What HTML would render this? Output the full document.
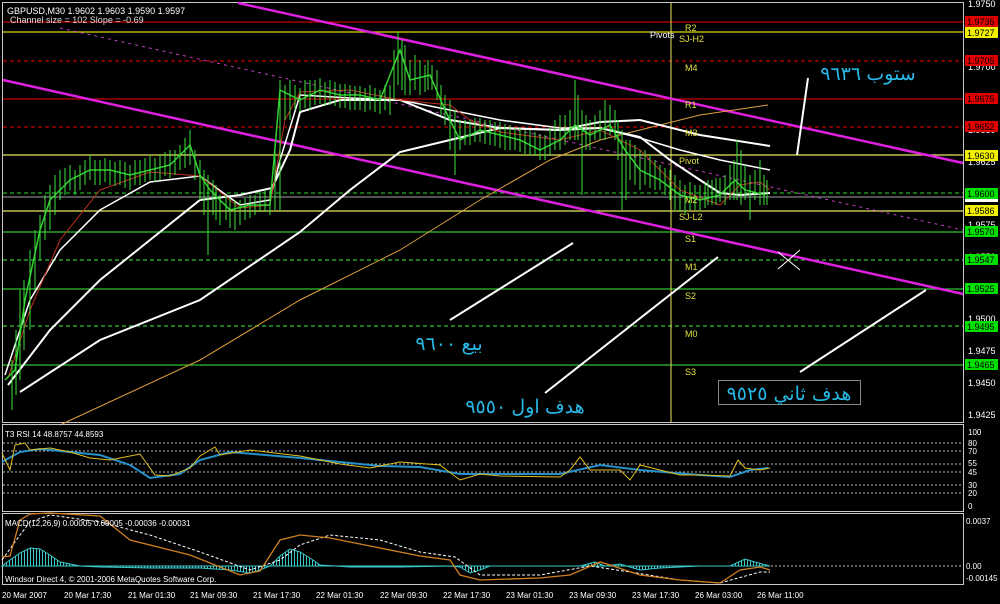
<!DOCTYPE html>
<html><head><meta charset="utf-8"><style>
html,body{margin:0;padding:0;background:#000;width:1000px;height:604px;overflow:hidden}
svg{display:block}
text{font-family:"Liberation Sans",sans-serif}
.ar{font-family:"DejaVu Sans","Liberation Sans",sans-serif}
</style></head><body>
<svg width="1000" height="604" viewBox="0 0 1000 604" xmlns="http://www.w3.org/2000/svg">
<defs>
<pattern id="hs" width="3" height="10" patternUnits="userSpaceOnUse"><rect x="0" y="0" width="1" height="10" fill="#3cc8c8"/></pattern>
</defs>
<rect width="1000" height="604" fill="#000"/>
<rect x="2.5" y="2.5" width="961" height="420" fill="none" stroke="#c8c8c8" stroke-width="1"/>
<g stroke-width="1.2">
<line x1="3" y1="22" x2="963" y2="22" stroke="#c00000"/>
<line x1="3" y1="32" x2="963" y2="32" stroke="#d8d800"/>
<line x1="3" y1="61" x2="963" y2="61" stroke="#c00000" stroke-dasharray="4,3"/>
<line x1="3" y1="99" x2="963" y2="99" stroke="#c00000"/>
<line x1="3" y1="127" x2="963" y2="127" stroke="#c00000" stroke-dasharray="4,3"/>
<line x1="3" y1="155" x2="963" y2="155" stroke="#e8e860"/>
<line x1="3" y1="193" x2="963" y2="193" stroke="#20b020" stroke-dasharray="4,3"/>
<line x1="3" y1="197" x2="963" y2="197" stroke="#808080"/>
<line x1="3" y1="211" x2="963" y2="211" stroke="#e8e860"/>
<line x1="3" y1="232" x2="963" y2="232" stroke="#30c030"/>
<line x1="3" y1="260" x2="963" y2="260" stroke="#30c030" stroke-dasharray="4,3"/>
<line x1="3" y1="289" x2="963" y2="289" stroke="#30c030"/>
<line x1="3" y1="326" x2="963" y2="326" stroke="#30c030" stroke-dasharray="4,3"/>
<line x1="3" y1="365" x2="963" y2="365" stroke="#30c030"/>
</g>
<line x1="671" y1="3" x2="671" y2="422" stroke="#e8e860" stroke-width="1"/>
<line x1="238" y1="3" x2="963" y2="163" stroke="#e020e0" stroke-width="2.5"/>
<line x1="3" y1="80" x2="963" y2="294" stroke="#e020e0" stroke-width="2.5"/>
<line x1="60" y1="28" x2="963" y2="230" stroke="#c040c0" stroke-width="1" stroke-dasharray="3,4"/>
<polyline fill="none" stroke="#e0a040" stroke-width="1" points="60,425 200,360 300,300 400,250 480,200 550,160 600,140 640,130 700,115 768,105"/>
<polyline fill="none" stroke="#fff" stroke-width="2" points="20,392 100,340 200,300 300,232 350,190 400,152 450,140 500,128 560,130 600,122 640,120 700,135 770,146"/>
<polyline fill="none" stroke="#fff" stroke-width="2" points="8,385 50,330 100,280 150,240 200,200 240,195 272,188 290,150 300,112 340,100 400,100 450,120 500,128 560,130 600,128 640,137 670,160 700,180 720,193 740,195 770,193"/>
<polyline fill="none" stroke="#fff" stroke-width="1.5" points="5,375 30,300 60,250 100,210 150,182 200,176 240,205 270,200 280,160 300,95 350,98 400,100 450,110 500,120 560,128 600,128 640,138 680,150 720,160 770,170"/>
<polyline fill="none" stroke="#c03020" stroke-width="1" points="8,378 30,310 60,240 100,190 150,172 200,176 240,208 270,205 285,120 300,92 350,90 400,100 450,105 470,120 500,132 560,140 600,130 640,150 680,190 720,205 740,185 760,182 770,190"/>
<polyline fill="none" stroke="#30d030" stroke-width="1.5" points="5,380 15,370 25,300 40,230 50,200 70,180 90,170 110,170 130,175 150,170 170,165 190,145 200,175 210,190 230,210 250,205 270,205 280,90 300,100 320,90 340,95 360,95 380,100 400,50 410,80 430,75 445,110 460,140 480,130 500,135 520,140 540,150 560,140 575,125 590,135 610,125 625,150 640,170 660,180 680,195 700,200 720,195 735,180 745,190 765,195"/>
<path stroke="#40e040" stroke-width="1" fill="none" d="M12,360V410 M20,290V380 M30,250V330 M40,215V260 M50,185V230 M60,170V200 M80,165V190 M100,160V185 M120,160V185 M140,160V185 M160,155V180 M190,130V165 M200,160V200 M208,175V255 M220,195V225 M235,200V230 M255,195V215 M270,190V215 M280,80V210 M290,80V120 M310,80V110 M330,80V105 M350,85V110 M370,85V110 M390,85V115 M398,32V85 M405,45V95 M420,60V95 M432,65V90 M445,95V125 M455,110V175 M470,120V145 M490,120V145 M510,125V150 M530,130V155 M545,135V160 M560,115V150 M575,80V140 M582,110V195 M590,120V150 M605,100V140 M615,110V140 M622,130V210 M630,140V180 M645,150V185 M660,165V190 M675,175V210 M685,185V215 M700,185V210 M712,180V205 M725,175V205 M737,140V200 M745,165V200 M750,175V220 M760,160V205 M767,180V205"/>
<path stroke="#40e040" stroke-width="1" fill="none" d="M16,330V395 M24,280V350 M35,230V290 M45,195V240 M55,175V215 M65,168V195 M70,165V190 M75,170V195 M85,160V185 M90,155V180 M95,160V185 M105,158V182 M110,160V185 M115,162V186 M125,162V188 M130,165V190 M135,160V185 M145,158V182 M150,156V180 M155,158V182 M165,152V176 M170,150V178 M175,150V175 M180,145V170 M185,138V168 M195,150V180 M204,170V215 M213,180V215 M216,185V220 M226,195V220 M230,198V228 M240,200V225 M245,198V220 M250,195V218 M260,192V212 M265,190V212 M275,150V210 M285,85V120 M295,85V110 M300,88V112 M305,80V108 M315,80V105 M320,78V104 M325,82V106 M335,82V106 M340,84V108 M345,84V108 M355,86V110 M360,86V110 M365,88V112 M375,88V112 M380,90V114 M385,85V110 M394,50V100 M402,40V90 M410,60V95 M415,55V90 M425,65V92 M428,60V90 M437,70V100 M441,85V115 M450,100V150 M460,120V150 M465,120V145 M475,118V142 M480,118V142 M485,120V144 M495,122V146 M500,122V148 M505,124V150 M515,128V150 M520,128V152 M525,130V154 M535,132V156 M540,134V160 M550,128V155 M555,120V150 M565,115V145 M570,110V140 M578,95V140 M586,115V150 M595,115V140 M600,110V140 M610,105V135 M618,120V160 M626,140V200 M635,145V185 M640,150V190 M650,155V188 M655,160V190 M665,168V195 M670,170V200 M680,180V212 M690,182V210 M695,185V210 M705,183V208 M708,180V205 M716,178V205 M720,178V202 M730,165V200 M734,160V200 M741,150V205 M755,170V200 M764,175V205"/>
<g stroke="#fff" stroke-width="2">
<line x1="450" y1="320" x2="573" y2="243"/>
<line x1="545" y1="393" x2="718" y2="257"/>
<line x1="800" y1="372" x2="926" y2="290"/>
<line x1="797" y1="155" x2="808" y2="78"/>
</g>
<g stroke="#fff" stroke-width="1"><line x1="778" y1="252" x2="800" y2="270"/><line x1="800" y1="250" x2="778" y2="269"/></g>
<g class="ar" fill="#28b8e8" font-size="19">
<text x="868" y="80" text-anchor="middle">ستوب ٩٦٣٦</text>
<text x="449" y="350" text-anchor="middle">بيع ٩٦٠٠</text>
<text x="525" y="413" text-anchor="middle">هدف اول ٩٥٥٠</text>
</g>
<rect x="718.5" y="380.5" width="142" height="24" fill="#000" stroke="#888" stroke-width="1"/>
<text class="ar" x="789" y="400" text-anchor="middle" fill="#28b8e8" font-size="19">هدف ثاني ٩٥٢٥</text>
<g fill="#e0e040" font-size="9">
<text x="685" y="31">R2</text><text x="679" y="42">SJ-H2</text><text x="685" y="71">M4</text>
<text x="685" y="108">R1</text><text x="685" y="136">M3</text><text x="679" y="164">Pivot</text>
<text x="685" y="203">M2</text><text x="679" y="220">SJ-L2</text><text x="685" y="242">S1</text>
<text x="685" y="270">M1</text><text x="685" y="299">S2</text><text x="685" y="337">M0</text><text x="685" y="375">S3</text>
</g>
<text x="650" y="38" fill="#fff" font-size="9">Pivots</text>
<text x="7" y="14" fill="#fff" font-size="9">GBPUSD,M30  1.9602 1.9603 1.9590 1.9597</text>
<text x="10" y="23" fill="#ddd" font-size="9">Channel size = 102 Slope = -0.69</text>
<g fill="#fff" font-size="9">
<text x="968" y="7">1.9750</text><text x="968" y="70">1.9700</text><text x="968" y="133">1.9650</text>
<text x="968" y="165">1.9625</text><text x="968" y="228">1.9575</text><text x="968" y="260">1.9550</text>
<text x="968" y="322">1.9500</text><text x="968" y="354">1.9475</text><text x="968" y="386">1.9450</text><text x="968" y="418">1.9425</text>
</g>
<g font-size="9">
<rect x="965" y="16" width="33" height="11" fill="#e00000"/><text x="967" y="25" fill="#000">1.9735</text>
<rect x="965" y="27" width="33" height="11" fill="#f0f000"/><text x="967" y="36" fill="#000">1.9727</text>
<rect x="965" y="55" width="33" height="11" fill="#e00000"/><text x="967" y="64" fill="#000">1.9705</text>
<rect x="965" y="93" width="33" height="11" fill="#e00000"/><text x="967" y="102" fill="#000">1.9675</text>
<rect x="965" y="121" width="33" height="11" fill="#e00000"/><text x="967" y="130" fill="#000">1.9652</text>
<rect x="965" y="150" width="33" height="11" fill="#f0f000"/><text x="967" y="159" fill="#000">1.9630</text>
<rect x="965" y="188" width="33" height="11" fill="#00e000"/><text x="967" y="197" fill="#000">1.9600</text>
<rect x="965" y="199" width="33" height="3" fill="#fff"/>
<rect x="965" y="205" width="33" height="11" fill="#f0f000"/><text x="967" y="214" fill="#000">1.9586</text>
<rect x="965" y="226" width="33" height="11" fill="#00e000"/><text x="967" y="235" fill="#000">1.9570</text>
<rect x="965" y="254" width="33" height="11" fill="#00e000"/><text x="967" y="263" fill="#000">1.9547</text>
<rect x="965" y="283" width="33" height="11" fill="#00e000"/><text x="967" y="292" fill="#000">1.9525</text>
<rect x="965" y="321" width="33" height="11" fill="#00e000"/><text x="967" y="330" fill="#000">1.9495</text>
<rect x="965" y="359" width="33" height="11" fill="#00e000"/><text x="967" y="368" fill="#000">1.9465</text>
</g>
<rect x="2.5" y="424.5" width="961" height="87" fill="none" stroke="#c8c8c8"/>
<g stroke="#bbb" stroke-dasharray="2,2" stroke-width="1">
<line x1="3" y1="443" x2="963" y2="443"/><line x1="3" y1="451" x2="963" y2="451"/>
<line x1="3" y1="464" x2="963" y2="464"/><line x1="3" y1="472" x2="963" y2="472"/>
<line x1="3" y1="485" x2="963" y2="485"/><line x1="3" y1="493" x2="963" y2="493"/>
</g>
<text x="5" y="437" fill="#fff" font-size="8">T3 RSI 14 48.8757 44.8593</text>
<polyline fill="none" stroke="#2890c8" stroke-width="2" points="2,462 20,452 40,449 100,455 130,465 150,478 180,474 200,460 230,452 300,458 380,466 420,467 460,474 560,474 600,465 640,470 700,475 730,477 750,470 768,468"/>
<polyline fill="none" stroke="#e0c020" stroke-width="1" points="2,453 10,470 15,445 25,443 30,450 50,448 70,452 90,458 110,460 140,454 155,475 170,476 190,468 200,456 215,447 220,455 250,450 300,456 340,464 370,468 400,462 440,465 460,480 480,474 500,476 560,477 570,470 580,457 590,470 620,470 630,480 640,465 680,475 700,475 730,476 738,460 745,468 760,470 770,468"/>
<g fill="#fff" font-size="8">
<text x="968" y="435">100</text><text x="968" y="446">80</text><text x="968" y="454">70</text>
<text x="968" y="466">55</text><text x="968" y="475">45</text><text x="968" y="488">30</text><text x="968" y="496">20</text><text x="968" y="509">0</text>
</g>
<rect x="2.5" y="513.5" width="961" height="71" fill="none" stroke="#c8c8c8"/>
<line x1="3" y1="566" x2="963" y2="566" stroke="#bbb" stroke-dasharray="2,2"/>
<polygon fill="url(#hs)" stroke="#3cc8c8" stroke-width="1" points="2,566 10,560 20,553 30,548 40,549 50,555 60,562 80,566 100,567 150,568 200,568 230,570 250,573 260,570 270,566 280,556 290,549 300,552 310,558 320,565 350,567 400,567 450,566 460,567 470,573 480,570 490,566 550,566 580,566 595,562 605,566 620,564 640,570 660,568 700,566 730,566 745,559 755,562 770,566"/>
<polyline fill="none" stroke="#fff" stroke-width="1" stroke-dasharray="3,2" points="2,560 20,535 30,522 50,515 100,522 150,535 200,552 250,570 280,560 300,545 330,535 380,540 420,552 455,557 480,575 540,575 590,566 630,572 680,580 720,583 760,572 770,572"/>
<polyline fill="none" stroke="#d08020" stroke-width="1.3" points="2,557 10,556 20,520 30,514 50,513 100,516 130,540 190,555 240,575 260,571 280,540 300,535 330,538 380,548 420,556 450,560 460,575 480,580 540,578 570,575 600,562 610,565 640,575 680,580 720,583 740,570 760,567 770,570"/>
<text x="5" y="526" fill="#fff" font-size="8">MACD(12,26,9) 0.00005 0.00005 -0.00036 -0.00031</text>
<text x="5" y="582" fill="#fff" font-size="8">Windsor Direct 4, © 2001-2006 MetaQuotes Software Corp.</text>
<g fill="#fff" font-size="8"><text x="966" y="524">0.0037</text><text x="966" y="569">0.00</text><text x="966" y="581">-0.00145</text></g>
<g fill="#fff" font-size="8">
<text x="2" y="598">20 Mar 2007</text><text x="64" y="598">20 Mar 17:30</text><text x="128" y="598">21 Mar 01:30</text>
<text x="190" y="598">21 Mar 09:30</text><text x="253" y="598">21 Mar 17:30</text><text x="316" y="598">22 Mar 01:30</text>
<text x="380" y="598">22 Mar 09:30</text><text x="443" y="598">22 Mar 17:30</text><text x="506" y="598">23 Mar 01:30</text>
<text x="569" y="598">23 Mar 09:30</text><text x="632" y="598">23 Mar 17:30</text><text x="695" y="598">26 Mar 03:00</text><text x="757" y="598">26 Mar 11:00</text>
</g>
</svg>
</body></html>
